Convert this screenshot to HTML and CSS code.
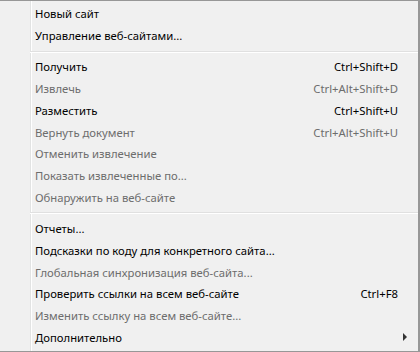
FILE: index.html
```html
<!DOCTYPE html>
<html lang="ru">
<head>
<meta charset="utf-8">
<link rel="stylesheet" href="styles.css">
</head>
<body>
<div class="menu">
  <div class="item"><span class="label">Новый сайт</span></div>
  <div class="item"><span class="label">Управление веб-сайтами...</span></div>
  <div class="sep"></div>
  <div class="item"><span class="label">Получить</span><span class="key">Ctrl+Shift+D</span></div>
  <div class="item off"><span class="label">Извлечь</span><span class="key">Ctrl+Alt+Shift+D</span></div>
  <div class="item"><span class="label">Разместить</span><span class="key">Ctrl+Shift+U</span></div>
  <div class="item off"><span class="label">Вернуть документ</span><span class="key">Ctrl+Alt+Shift+U</span></div>
  <div class="item off"><span class="label">Отменить извлечение</span></div>
  <div class="item off"><span class="label">Показать извлеченные по...</span></div>
  <div class="item off"><span class="label">Обнаружить на веб-сайте</span></div>
  <div class="sep"></div>
  <div class="item"><span class="label">Отчеты...</span></div>
  <div class="item"><span class="label">Подсказки по коду для конкретного сайта...</span></div>
  <div class="item off"><span class="label">Глобальная синхронизация веб-сайта...</span></div>
  <div class="item"><span class="label">Проверить ссылки на всем веб-сайте</span><span class="key">Ctrl+F8</span></div>
  <div class="item off"><span class="label">Изменить ссылку на всем веб-сайте...</span></div>
  <div class="item"><span class="label">Дополнительно</span><span class="arrow"></span></div>
</div>
</body>
</html>
```
FILE: styles.css
```css
html, body {
  margin: 0;
  padding: 0;
  background: #f0f0f0;
}
.menu {
  box-sizing: border-box;
  width: 420px;
  height: 352px;
  border-top: 1px solid #979797;
  border-right: 2px solid #979797;
  border-bottom: 1px solid #979797;
  padding-top: 2px;
  background-color: #f0f0f0;
  background-image: linear-gradient(to right, transparent 30px, #e2e3e3 30px, #e2e3e3 31px, #ffffff 31px, #ffffff 32px, transparent 32px);
  font-family: "Noto Sans", "Open Sans", sans-serif;
  font-size: 11.3px;
  color: #000;
}
.item {
  display: flex;
  align-items: center;
  height: 21.75px;
  padding-left: 35px;
  padding-right: 20px;
  white-space: nowrap;
}
.label {
  flex: 1;
}
.key {
  text-align: right;
}
.off {
  color: #6d6d6d;
}
.sep {
  margin: 4px 0 3.5px 30px;
  height: 0;
  border-top: 1px solid #e0e0e0;
  border-bottom: 1px solid #ffffff;
}
.arrow {
  width: 0;
  height: 0;
  margin-right: -9px;
  border-top: 4px solid transparent;
  border-bottom: 4px solid transparent;
  border-left: 4px solid #333;
}
```
